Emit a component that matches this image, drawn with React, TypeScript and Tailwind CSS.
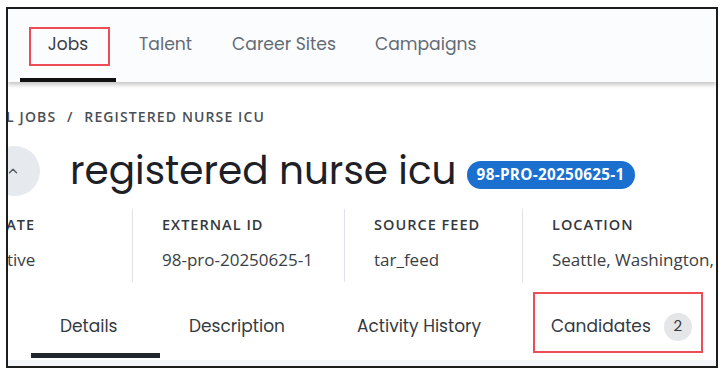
import React from "react";

const poppins = { fontFamily: "Poppins, Inter, 'Noto Sans', sans-serif" };
const open = { fontFamily: "'Open Sans', 'Noto Sans', sans-serif" };

export default function App() {
  return (
    <div className="w-[726px] h-[375px] bg-white pt-[7px] pl-[6px]">
      <div className="w-[712px] h-[361px] border-2 border-[#1c1c1c] overflow-hidden bg-white relative">
        {/* top nav */}
        <div
          className="h-[73px] bg-[#fbfcfe] shadow-[0_3px_4px_rgba(0,0,0,0.22)] flex items-stretch relative z-10 pl-[12px]"
          style={poppins}
        >
          <div className="relative w-[96px] flex items-center justify-center text-[17px] text-[#3b3f46] pb-[2px]">
            <span>Jobs</span>
            <div className="absolute left-[9px] top-[18px] w-[81px] h-[39px] border-2 border-[#ee4d55]" />
            <div className="absolute left-0 right-0 bottom-0 h-[4px] bg-[#111]" />
          </div>
          <div className="flex items-center text-[17.2px] text-[#636a74] ml-[23px] pb-[2px]">Talent</div>
          <div className="flex items-center text-[17.2px] text-[#636a74] ml-[40px] pb-[2px]">Career Sites</div>
          <div className="flex items-center text-[17.2px] text-[#636a74] ml-[39px] pb-[2px]">Campaigns</div>
        </div>

        {/* breadcrumb */}
        <div
          className="mt-[27px] ml-[-21px] text-[14px] font-semibold tracking-[0.08em] text-[#4a4f56] whitespace-nowrap leading-[16px]"
          style={open}
        >
          ALL JOBS <span className="mx-[6px]">/</span> REGISTERED NURSE ICU
        </div>

        {/* title row */}
        <div className="flex items-center mt-[21px] ml-[-18px] whitespace-nowrap">
          <div className="w-[50px] h-[50px] rounded-full bg-[#e6e9ed] flex items-center justify-center shrink-0">
            <svg width="14" height="14" viewBox="0 0 24 24" fill="none" stroke="#555b62" strokeWidth="2.4" strokeLinecap="round" strokeLinejoin="round" className="ml-[-4px]">
              <path d="M6 15l6-6 6 6" />
            </svg>
          </div>
          <div className="ml-[30px] text-[39px] text-[#1d2026] leading-[48px]" style={poppins}>
            registered nurse icu
          </div>
          <div
            className="ml-[10px] mt-[7px] h-[28px] px-[10px] rounded-full bg-[#1a6fcf] text-white text-[15.3px] font-bold flex items-center tracking-[0.02em]"
            style={open}
          >
            98-PRO-20250625-1
          </div>
        </div>

        {/* info row */}
        <div className="flex mt-[13px] ml-[-20px] whitespace-nowrap" style={open}>
          {[
            { l: "STATE", v: "Active", w: "w-[145px]" },
            { l: "EXTERNAL ID", v: "98-pro-20250625-1", w: "w-[212px]" },
            { l: "SOURCE FEED", v: "tar_feed", w: "w-[178px]" },
            { l: "LOCATION", v: "Seattle, Washington, United States", w: "w-[240px]" },
          ].map((c, i) => (
            <div
              key={c.l}
              className={`${c.w} shrink-0 h-[73px] flex flex-col ${i === 0 ? "pl-0" : "pl-[29px]"} ${i < 3 ? "border-r border-[#dfe2e6]" : ""}`}
            >
              <div className="mt-[7px] text-[14.5px] font-semibold tracking-[0.07em] text-[#33383f] leading-[18px]">{c.l}</div>
              <div className="mt-[16px] text-[17px] text-[#3a3e45] leading-[20px]">{c.v}</div>
            </div>
          ))}
        </div>

        {/* tabs */}
        <div className="flex mt-[10px] h-[68px] whitespace-nowrap text-[17px] text-[#353a41]" style={poppins}>
          <div className="ml-[23px] w-[129px] shrink-0 relative flex items-center pl-[29px] pt-[1px]">
            Details
            <div className="absolute left-0 right-0 bottom-[2px] h-[5px] bg-[#1f272d]" />
          </div>
          <div className="ml-[29px] w-[95px] shrink-0 flex items-center pt-[1px]">Description</div>
          <div className="ml-[73px] w-[121px] shrink-0 flex items-center pt-[1px]">Activity History</div>
          <div className="ml-[73px] relative flex items-center pt-[1px]">
            <span>Candidates</span>
            <span className="ml-[13px] w-[28px] h-[28px] rounded-full bg-[#e5e6e8] flex items-center justify-center text-[15px]">2</span>
            <div className="absolute left-[-18px] top-0 w-[170px] h-[61px] border-2 border-[#ee4d55]" />
          </div>
        </div>
        <div className="h-[8px] bg-[#f3f5f8]" />
      </div>
    </div>
  );
}
